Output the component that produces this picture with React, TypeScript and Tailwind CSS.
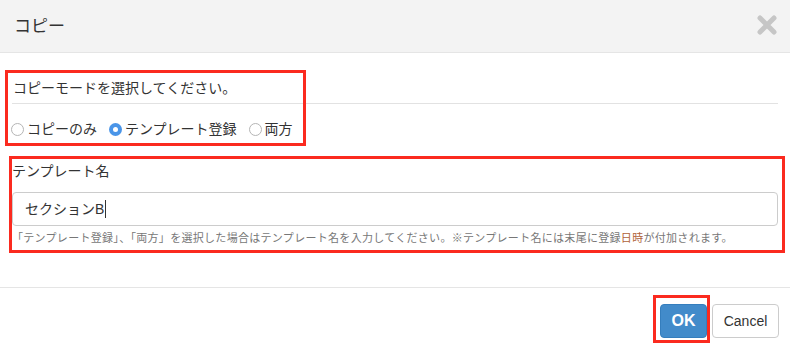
const jp = "font-['Helvetica_Neue','Liberation_Sans','Noto_Sans_CJK_JP',sans-serif]";

const Radio = ({ checked, label }: { checked?: boolean; label: string }) => (
  <label className="flex items-center gap-[3px]">
    {checked ? (
      <span className="flex h-[13px] w-[13px] items-center justify-center rounded-full bg-[#4a95e8]">
        <span className="h-[5px] w-[5px] rounded-full bg-white" />
      </span>
    ) : (
      <span className="h-[13px] w-[13px] rounded-full border border-[#b5b5b5] bg-white" />
    )}
    <span>{label}</span>
  </label>
);

const Mark = ({ className }: { className: string }) => (
  <div className={`pointer-events-none absolute border-[3px] border-[#fb2a1f] ${className}`} />
);

export default function App() {
  return (
    <div className={`relative h-[344px] w-[790px] overflow-hidden bg-white text-[#333] ${jp}`}>
      <div className="flex h-[53px] items-center justify-between border-b border-[#e5e5e5] bg-[#f3f3f3] pl-[14px] pr-[12px]">
        <h4 className="text-[17px] leading-none">コピー</h4>
        <svg width="22" height="22" viewBox="0 0 22 22" className="mb-[2px]">
          <path d="M4 4 L18 18 M18 4 L4 18" stroke="#c6c6c6" strokeWidth="5" strokeLinecap="round" />
        </svg>
      </div>

      <div className="px-[12px] pt-[25px]">
        <div className="pl-[1px] text-[14px] leading-[20px]">コピーモードを選択してください。</div>
        <hr className="mt-[5px] border-t border-[#e2e2e2]" />
        <div className="mt-[15px] flex h-[20px] items-center text-[14px]">
          <div className="-ml-[1px] flex gap-[12px]">
            <Radio label="コピーのみ" />
            <Radio checked label="テンプレート登録" />
            <Radio label="両方" />
          </div>
        </div>

        <div className="mt-[22px] text-[14px] leading-[20px]">テンプレート名</div>
        <div className="mt-[11px] flex h-[34px] items-center rounded-[4px] border border-[#cccccc] pl-[12px] text-[14px]">
          <span>セクションB</span>
          <span className="ml-[1px] h-[18px] w-px bg-[#333]" />
        </div>
        <div className="mt-[5px] text-[11px] leading-[14px] tracking-[0.3px] text-[#777]">
          「テンプレート登録」、「両方」を選択した場合はテンプレート名を入力してください。※テンプレート名には末尾に登録<span className="text-[#b0623a]">日時</span>が付加されます。
        </div>
      </div>

      <div className="mt-[42px] flex justify-end gap-[5px] border-t border-[#e5e5e5] pr-[11px] pt-[16px]">
        <button className="h-[34px] w-[47px] rounded-[4px] border border-[#357ebd] bg-[#428bca] text-[16px] font-bold text-white">
          OK
        </button>
        <button className="h-[34px] w-[67px] rounded-[4px] border border-[#cccccc] bg-white text-[14px] text-[#333]">
          Cancel
        </button>
      </div>

      <Mark className="left-[5px] top-[70px] h-[76px] w-[301px]" />
      <Mark className="left-[9px] top-[156px] h-[97px] w-[776px]" />
      <Mark className="left-[653px] top-[295px] h-[48px] w-[57px]" />
    </div>
  );
}
